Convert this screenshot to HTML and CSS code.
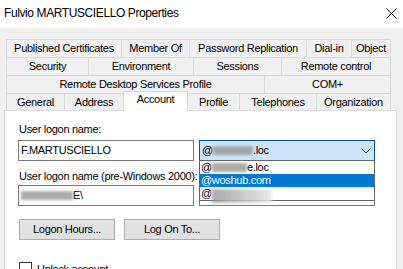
FILE: index.html
```html
<!DOCTYPE html>
<html lang="en">

<head>
  <meta charset="UTF-8" />
  <title>Fulvio MARTUSCIELLO Properties</title>
  <link rel="stylesheet" href="styles.css">
</head>

<body>
  <div class="titlebar">
    <span class="title">Fulvio MARTUSCIELLO Properties</span>
    <svg class="close" width="11" height="11" viewBox="0 0 11 11">
      <path d="M0.5 0.5 L10.5 10.5 M10.5 0.5 L0.5 10.5" stroke="#111" stroke-width="1" fill="none" />
    </svg>
  </div>

  <div class="dialog">
    <div class="tabs">
      <div class="tab-row">
        <div class="tab" style="width:115px">Published Certificates</div>
        <div class="tab" style="width:68px">Member Of</div>
        <div class="tab" style="width:117px">Password Replication</div>
        <div class="tab" style="width:45px">Dial-in</div>
        <div class="tab" style="width:40px">Object</div>
      </div>
      <div class="tab-row">
        <div class="tab" style="width:82px">Security</div>
        <div class="tab" style="width:105px">Environment</div>
        <div class="tab" style="width:88px">Sessions</div>
        <div class="tab" style="width:110px">Remote control</div>
      </div>
      <div class="tab-row">
        <div class="tab" style="width:258px">Remote Desktop Services Profile</div>
        <div class="tab" style="width:127px">COM+</div>
      </div>
      <div class="tab-row last">
        <div class="tab" style="width:58px">General</div>
        <div class="tab" style="width:59px">Address</div>
        <div class="tab active" style="width:65px">Account</div>
        <div class="tab" style="width:51px">Profile</div>
        <div class="tab" style="width:77px">Telephones</div>
        <div class="tab" style="width:75px">Organization</div>
      </div>
    </div>

    <div class="panel">
      <div class="label">User logon name:</div>
      <div class="field-row">
        <div class="textbox">F.MARTUSCIELLO</div>
        <div class="combo focused">
          <span>@</span><span class="blur" style="width:40px"></span><span>.loc</span>
          <svg class="chevron" width="10" height="6" viewBox="0 0 10 6">
            <path d="M0.5 0.5 L5 5 L9.5 0.5" stroke="#3c3c3c" stroke-width="1" fill="none" />
          </svg>
          <!-- open drop-down list -->
          <div class="dropdown">
            <div class="item"><span>@</span><span class="blur" style="width:35px"></span><span>e.loc</span></div>
            <div class="item selected">@woshub.com</div>
            <div class="item"><span>@</span><span class="blur light" style="width:60px"></span></div>
          </div>
        </div>
      </div>

      <div class="label second">User logon name (pre-Windows 2000):</div>
      <div class="field-row">
        <div class="textbox"><span class="blur" style="width:52px"></span><span>E\</span></div>
        <div class="combo"></div>
      </div>

      <div class="buttons">
        <div class="button">Logon Hours...</div>
        <div class="button">Log On To...</div>
      </div>

      <div class="check-row">
        <span class="checkbox"></span>
        <span>Unlock account</span>
      </div>
    </div>
  </div>
</body>

</html>
```

FILE: styles.css
```css
* {
  box-sizing: border-box;
  margin: 0;
  padding: 0;
}

body {
  font-family: 'Liberation Sans', Arial, sans-serif;
  font-size: 11px;
  letter-spacing: -0.3px;
  color: #000;
  background: #f0f0f0;
  width: 403px;
  height: 269px;
  overflow: hidden;
}

.titlebar {
  height: 28px;
  background: #fff;
  display: flex;
  align-items: center;
  justify-content: space-between;
  padding: 0 6px 2px 4px;
}

.title {
  font-size: 12px;
  letter-spacing: -0.4px;
}

.close {
  display: block;
}

.dialog {
  padding: 11px 0 0 4px;
}

.tabs {
  padding-left: 2px;
}

.tab-row {
  display: flex;
  height: 18px;
}

.tab-row.last {
  height: 17px;
}

.tab {
  height: 100%;
  border-top: 1px solid #d9d9d9;
  border-left: 1px solid #d9d9d9;
  text-align: center;
  line-height: 17px;
  white-space: nowrap;
}

.tab:last-child {
  border-right: 1px solid #d9d9d9;
}

.tab.active {
  background: #fff;
  height: 20px;
  margin-top: -2px;
  border-right: 1px solid #d9d9d9;
  line-height: 15px;
  position: relative;
  z-index: 1;
}

.tab.active + .tab {
  border-left: none;
}

.panel {
  width: 393px;
  height: 159px;
  background: #fff;
  border: 1px solid #d9d9d9;
  border-bottom: none;
  padding: 12px 0 0 13px;
  overflow: hidden;
}

.label {
  height: 13px;
  line-height: 13px;
  padding-left: 1px;
  margin-bottom: 4px;
}

.label.second {
  margin-top: 9px;
  margin-bottom: 2px;
}

.field-row {
  display: flex;
  gap: 5px;
}

.textbox,
.combo {
  width: 176px;
  height: 21px;
  border: 1px solid #7a7a7a;
  padding-left: 2px;
  line-height: 19px;
  display: flex;
  align-items: center;
  white-space: nowrap;
}

.combo {
  position: relative;
}

.combo.focused {
  background: #cce4f7;
  border-color: #005499;
  z-index: 2;
}

.chevron {
  margin-left: auto;
  margin-right: 3px;
}

.blur {
  display: inline-block;
  height: 9px;
  background: #9c9c9c;
  filter: blur(1.6px);
  opacity: 0.85;
}

.blur.light {
  height: 14px;
  background: linear-gradient(90deg, #9a9a9a, #c8c8c8 60%, #e6e6e6);
  margin-top: 5px;
}

.dropdown {
  position: absolute;
  top: 100%;
  left: -1px;
  width: 176px;
  height: 41px;
  background: #fff;
  border: 1px solid #646464;
}

.item {
  height: 13px;
  line-height: 13px;
  padding-left: 1px;
  display: flex;
  align-items: center;
}

.item.selected {
  background: #0078d7;
  color: #fff;
}

.buttons {
  display: flex;
  gap: 9px;
  margin: 13px 0 0 1px;
}

.button {
  width: 96px;
  height: 21px;
  background: #e1e1e1;
  border: 1px solid #adadad;
  text-align: center;
  line-height: 19px;
}

.check-row {
  display: flex;
  align-items: center;
  gap: 5px;
  margin-top: 22px;
  padding-left: 1px;
}

.checkbox {
  width: 13px;
  height: 13px;
  border: 1px solid #333;
  background: #fff;
}
```
